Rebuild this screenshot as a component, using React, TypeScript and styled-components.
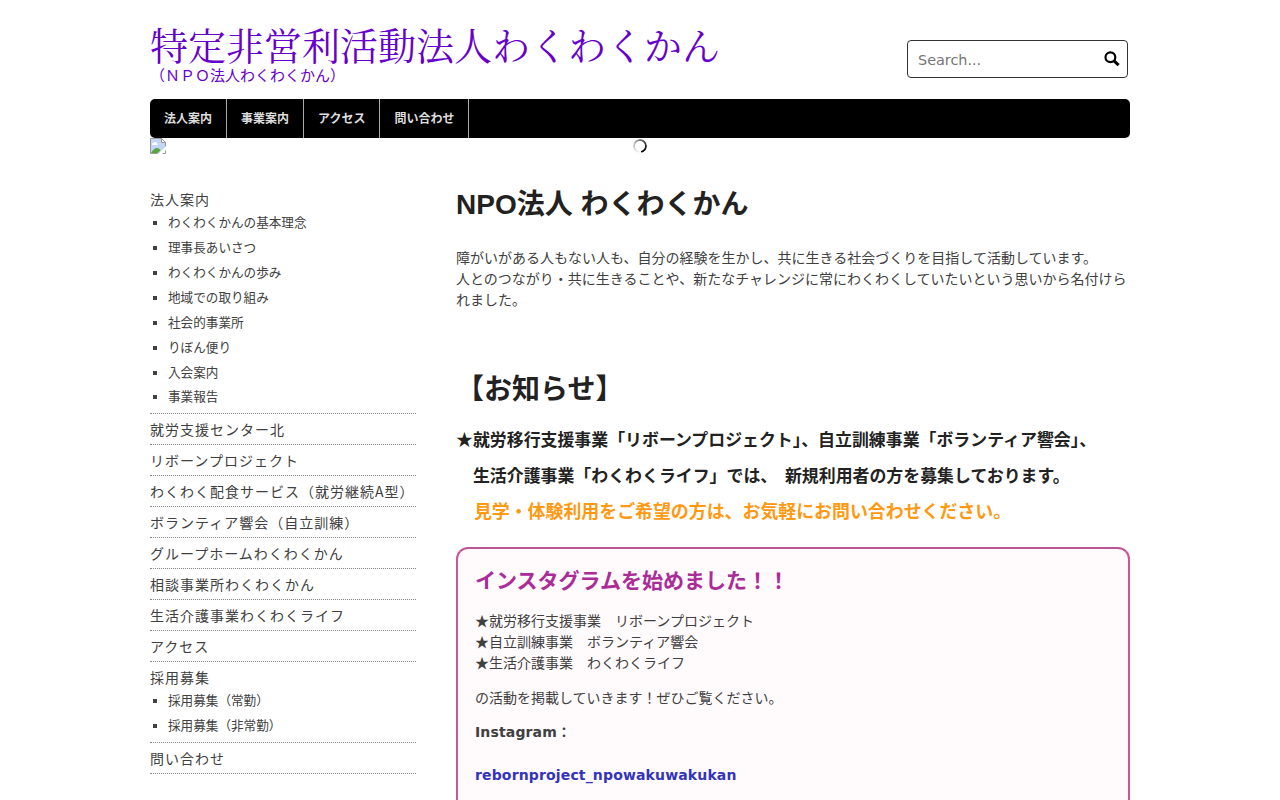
import React from "react";
import styled, { createGlobalStyle } from "styled-components";

const GlobalStyle = createGlobalStyle`
  html { overflow: hidden; }
  body {
    margin: 0;
    background: #fff;
    color: #404040;
    font: 14px/21px "Noto Sans CJK JP", sans-serif;
  }
  h1, h2, h3, p, ul { margin: 0; padding: 0; }
  a { color: inherit; text-decoration: none; }
`;

const Page = styled.div`
  width: 980px;
  height: 800px;
  margin: 0 auto;
  overflow: hidden;
`;

const Header = styled.header`
  display: flex;
  justify-content: space-between;
  height: 99px;
`;

const Brand = styled.div`
  padding-top: 24px;
  color: #6600cc;
`;

const SiteTitle = styled.h1`
  font: 400 38px/40px "Noto Serif CJK JP", "Noto Serif JP", serif;
`;

const Tagline = styled.p`
  margin-top: 2px;
  font: 400 15px/18px "Noto Sans CJK JP", sans-serif;
`;

const SearchBox = styled.form`
  display: flex;
  align-items: center;
  box-sizing: border-box;
  width: 221px;
  height: 38px;
  margin: 40px 2px 0 0;
  padding: 0 7px 0 10px;
  border: 1px solid #333;
  border-radius: 4px;
`;

const SearchInput = styled.input`
  flex: 1;
  min-width: 0;
  padding: 2px 0 0;
  border: 0;
  outline: 0;
  background: none;
  font: 14.4px/21px Verdana, "DejaVu Sans", sans-serif;
  &::placeholder { color: #757575; }
`;

const Nav = styled.nav`
  display: flex;
  height: 39px;
  border-radius: 5px;
  background: #000;
`;

const NavLink = styled.a`
  padding: 0 14px;
  border-right: 1px solid #aaa;
  color: #ddd;
  font: 700 12px/38px "Noto Sans CJK JP", sans-serif;
`;

const Slider = styled.div`
  display: grid;
  grid-template-columns: 1fr auto 1fr;
  height: 46px;
  svg { display: block; }
`;

const Spinner = styled.div`
  width: 14px;
  height: 14px;
  margin-top: 1px;
  border-radius: 50%;
  background: conic-gradient(#777 0deg, #222 90deg, #000 165deg, #fff 175deg, #eee 200deg, #bbb 290deg, #777 360deg);
  mask: radial-gradient(circle, transparent 4.6px, #000 5.4px);
`;

const Columns = styled.div`
  display: grid;
  grid-template-columns: 266px 674px;
  column-gap: 40px;
`;

const Menu = styled.ul`
  list-style: none;
`;

const MenuItem = styled.li`
  padding: 5px 0 4px;
  border-bottom: 1px dotted #888;
  line-height: 21px;
  letter-spacing: 1px;
`;

const SubMenu = styled.ul`
  list-style: none;
  margin: -0.7px 0 0.7px;
  font-size: 12.6px;
  letter-spacing: 0;
`;

const SubItem = styled.li`
  display: flex;
  align-items: center;
  height: 24.9px;
  &::before {
    content: "";
    width: 4px;
    height: 4px;
    margin: 3px 11px 0 3px;
    background: #404040;
  }
`;

const Main = styled.main`
  min-width: 0;
  padding-top: 3px;
`;

const Heading = styled.h2`
  color: #222;
  font: 700 28px/36px "Liberation Sans", "Noto Sans CJK JP", sans-serif;
`;

const Intro = styled.p`
  margin: 24px 0 62px;
`;

const Notice = styled.h3<{ $accent?: boolean }>`
  color: ${(p) => (p.$accent ? "#ff9912" : "#222")};
  font: 700 ${(p) => (p.$accent ? "17.92px/35px" : "16.92px/36px")} "Liberation Sans", "Noto Sans CJK JP", sans-serif;
  white-space: pre;
  word-spacing: 3px;
`;

const Notices = styled.div`
  margin: 15px 0 17px;
`;

const Card = styled.section`
  height: 300px;
  padding: 14px 17px;
  border: 2px solid #cc5599;
  border-top-color: #bb5594;
  border-radius: 12px;
  background: #fffafc;
`;

const CardTitle = styled.h3`
  margin-bottom: 15px;
  color: #aa2c99;
  font: 700 21px/32px "Noto Sans CJK JP", sans-serif;
`;

const CardText = styled.p`
  margin-bottom: 14px;
`;

const CardLabel = styled.p`
  margin-bottom: 21px;
  font: 700 14px/21px Verdana, "DejaVu Sans", "Noto Sans CJK JP", sans-serif;
  letter-spacing: 0.15px;
`;

const CardLink = styled.a`
  color: #3333bb;
  font: 700 14px/21px Verdana, "DejaVu Sans", sans-serif;
  letter-spacing: 0.15px;
`;

const MENU: { label: string; children?: string[] }[] = [
  {
    label: "法人案内",
    children: [
      "わくわくかんの基本理念",
      "理事長あいさつ",
      "わくわくかんの歩み",
      "地域での取り組み",
      "社会的事業所",
      "りぼん便り",
      "入会案内",
      "事業報告",
    ],
  },
  { label: "就労支援センター北" },
  { label: "リボーンプロジェクト" },
  { label: "わくわく配食サービス（就労継続A型）" },
  { label: "ボランティア響会（自立訓練）" },
  { label: "グループホームわくわくかん" },
  { label: "相談事業所わくわくかん" },
  { label: "生活介護事業わくわくライフ" },
  { label: "アクセス" },
  { label: "採用募集", children: ["採用募集（常勤）", "採用募集（非常勤）"] },
  { label: "問い合わせ" },
];

const SearchIcon = () => (
  <svg width="16" height="16" viewBox="0 0 16 16" fill="none" stroke="#000">
    <circle cx="6.4" cy="6.2" r="4.9" strokeWidth="2.2" />
    <path d="M10 9.8 L14.6 14.2" strokeWidth="3" />
  </svg>
);

const BrokenImage = () => (
  <svg width="16" height="16" viewBox="0 0 16 16">
    <path d="M.5.5h11l4 4v5l-6 6H.5z" fill="#c3d5f4" />
    <path d="M2 6.500c0-1.300 1-2 2-1.700.6-1.400 3-1 3 .6 1 0 1.300 1.600.2 1.600H2.400z" fill="#fff" />
    <path d="M1 15c1.500-3 4-5 6-5 1.500 0 3 1 3.500 2L8 15z" fill="#5aa53c" />
    <path d="M.5 15.500V.5h11l4 4v4M.5 15.500h7M12.500 15.500h3v-3" fill="none" stroke="#999" />
    <path d="M11.500.5v4h4z" fill="#fff" stroke="#999" />
    <path d="M8 16l8-7.500v3L11.500 16z" fill="#fff" />
  </svg>
);

export default function App() {
  return (
    <>
      <GlobalStyle />
      <Page lang="ja">
        <Header>
          <Brand>
            <SiteTitle>特定非営利活動法人わくわくかん</SiteTitle>
            <Tagline>（ＮＰＯ法人わくわくかん）</Tagline>
          </Brand>
          <SearchBox>
            <SearchInput placeholder="Search..." />
            <SearchIcon />
          </SearchBox>
        </Header>
        <Nav>
          {["法人案内", "事業案内", "アクセス", "問い合わせ"].map((label) => (
            <NavLink key={label} href="#">{label}</NavLink>
          ))}
        </Nav>
        <Slider>
          <BrokenImage />
          <Spinner />
        </Slider>
        <Columns>
          <Menu>
            {MENU.map((item) => (
              <MenuItem key={item.label}>
                <a href="#">{item.label}</a>
                {item.children && (
                  <SubMenu>
                    {item.children.map((child) => (
                      <SubItem key={child}><a href="#">{child}</a></SubItem>
                    ))}
                  </SubMenu>
                )}
              </MenuItem>
            ))}
          </Menu>
          <Main>
            <Heading>NPO法人 わくわくかん</Heading>
            <Intro>
              障がいがある人もない人も、自分の経験を生かし、共に生きる社会づくりを目指して活動しています。
              <br />
              人とのつながり・共に生きることや、新たなチャレンジに常にわくわくしていたいという思いから名付けられました。
            </Intro>
            <Heading>【お知らせ】</Heading>
            <Notices>
              <Notice>★就労移行支援事業「リボーンプロジェクト」、自立訓練事業「ボランティア響会」、</Notice>
              <Notice>{"　生活介護事業「わくわくライフ」では、 新規利用者の方を募集しております。"}</Notice>
              <Notice $accent>{"　見学・体験利用をご希望の方は、お気軽にお問い合わせください。"}</Notice>
            </Notices>
            <Card>
              <CardTitle>インスタグラムを始めました！！</CardTitle>
              <CardText>
                ★就労移行支援事業　リボーンプロジェクト
                <br />
                ★自立訓練事業　ボランティア響会
                <br />
                ★生活介護事業　わくわくライフ
              </CardText>
              <CardText>の活動を掲載していきます！ぜひご覧ください。</CardText>
              <CardLabel>Instagram：</CardLabel>
              <CardLink href="#">rebornproject_npowakuwakukan</CardLink>
            </Card>
          </Main>
        </Columns>
      </Page>
    </>
  );
}
